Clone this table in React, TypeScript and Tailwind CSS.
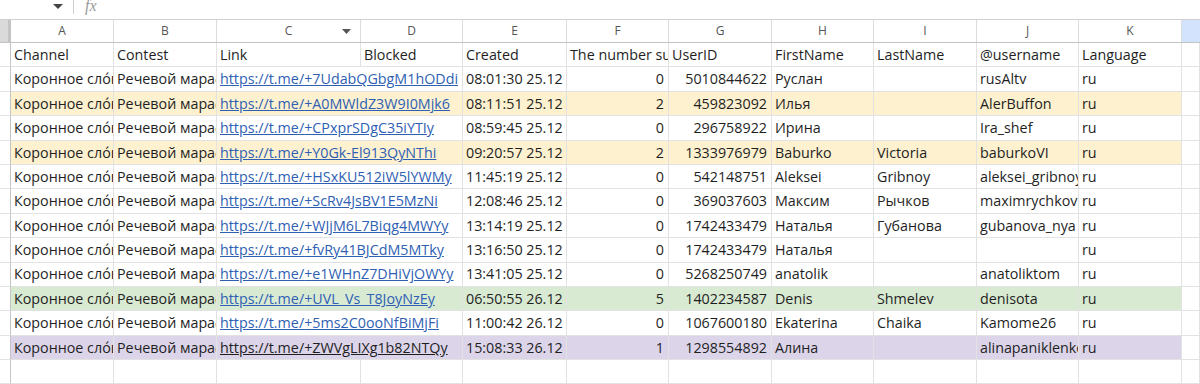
import React from 'react';

type Row = {
  link: string;
  created: string;
  num: string;
  userId: string;
  first: string;
  last: string;
  username: string;
  bg?: string;
  dark?: boolean;
};

const rows: Row[] = [
  { link: '+7UdabQGbgM1hODdi', created: '08:01:30 25.12', num: '0', userId: '5010844622', first: 'Руслан', last: '', username: 'rusAltv' },
  { link: '+A0MWldZ3W9I0Mjk6', created: '08:11:51 25.12', num: '2', userId: '459823092', first: 'Илья', last: '', username: 'AlerBuffon', bg: 'bg-[#fdf1d0]' },
  { link: '+CPxprSDgC35iYTIy', created: '08:59:45 25.12', num: '0', userId: '296758922', first: 'Ирина', last: '', username: 'Ira_shef' },
  { link: '+Y0Gk-El913QyNThi', created: '09:20:57 25.12', num: '2', userId: '1333976979', first: 'Baburko', last: 'Victoria', username: 'baburkoVI', bg: 'bg-[#fdf1d0]' },
  { link: '+HSxKU512iW5lYWMy', created: '11:45:19 25.12', num: '0', userId: '542148751', first: 'Aleksei', last: 'Gribnoy', username: 'aleksei_gribnoy' },
  { link: '+ScRv4JsBV1E5MzNi', created: '12:08:46 25.12', num: '0', userId: '369037603', first: 'Максим', last: 'Рычков', username: 'maximrychkov' },
  { link: '+WJjM6L7Biqg4MWYy', created: '13:14:19 25.12', num: '0', userId: '1742433479', first: 'Наталья', last: 'Губанова', username: 'gubanova_nya' },
  { link: '+fvRy41BJCdM5MTky', created: '13:16:50 25.12', num: '0', userId: '1742433479', first: 'Наталья', last: '', username: '' },
  { link: '+e1WHnZ7DHiVjOWYy', created: '13:41:05 25.12', num: '0', userId: '5268250749', first: 'anatolik', last: '', username: 'anatoliktom' },
  { link: '+UVL_Vs_T8JoyNzEy', created: '06:50:55 26.12', num: '5', userId: '1402234587', first: 'Denis', last: 'Shmelev', username: 'denisota', bg: 'bg-[#d9ead3]' },
  { link: '+5ms2C0ooNfBiMjFi', created: '11:00:42 26.12', num: '0', userId: '1067600180', first: 'Ekaterina', last: 'Chaika', username: 'Kamome26' },
  { link: '+ZWVgLIXg1b82NTQy', created: '15:08:33 26.12', num: '1', userId: '1298554892', first: 'Алина', last: '', username: 'alinapaniklenko', bg: 'bg-[#dcd5ea]', dark: true },
];

const cols = 'grid grid-cols-[11px_103px_103px_144px_102px_104px_102px_103px_102px_103px_102px_103px_1fr]';
const cell = 'h-[24.4px] border-r border-b border-[#e2e2e2] px-[3px] flex items-center overflow-hidden whitespace-nowrap';

function Cell({ children, right, className = '' }: { children?: React.ReactNode; right?: boolean; className?: string }) {
  return <div className={`${cell} ${right ? 'justify-end pr-[4px]' : ''} ${className}`}>{children}</div>;
}

const letters = ['A', 'B', 'C', 'D', 'E', 'F', 'G', 'H', 'I', 'J', 'K'];

export default function App() {
  return (
    <div className="w-[1200px] h-[384px] overflow-hidden bg-white text-[14.3px] text-[#1f1f1f]" style={{ fontFamily: '"Open Sans", sans-serif' }}>
      {/* formula bar strip */}
      <div className="h-[20px] flex items-start border-b border-[#d0d0d0]">
        <div className="w-[73px] flex justify-end pr-[10px] pt-[4px]">
          <svg width="10" height="6" viewBox="0 0 10 6">
            <path d="M0 0 L10 0 L5 5 Z" fill="#444" />
          </svg>
        </div>
        <div className="w-px h-[14px] bg-[#cfcfcf]" />
        <div className="pl-[11px] -mt-[6px] text-[16px] italic text-[#9a9a9a]" style={{ fontFamily: '"Liberation Serif", serif' }}>
          fx
        </div>
      </div>

      {/* column letters */}
      <div className={`${cols} h-[23px] border-b border-[#c4c4c4] text-[12px] text-[#555]`}>
        <div className="bg-[#dadada] border-r-[3px] border-[#c4c4c4]" />
        {letters.map((l) => (
          <div key={l} className="relative flex items-center justify-center border-r border-[#dcdcdc]">
            {l}
            {l === 'C' && (
              <svg className="absolute right-[9px] top-[9px]" width="9" height="5" viewBox="0 0 9 5">
                <path d="M0 0 L9 0 L4.5 5 Z" fill="#555" />
              </svg>
            )}
          </div>
        ))}
        <div className="bg-[#d3e3fd]" />
      </div>

      {/* header row */}
      <div className={cols}>
        <div className="border-r border-[#c4c4c4] border-b border-b-[#e2e2e2]" />
        <Cell>Channel</Cell>
        <Cell>Contest</Cell>
        <Cell>Link</Cell>
        <Cell>Blocked</Cell>
        <Cell>Created</Cell>
        <Cell>The number subscribers</Cell>
        <Cell>UserID</Cell>
        <Cell>FirstName</Cell>
        <Cell>LastName</Cell>
        <Cell>@username</Cell>
        <Cell>Language</Cell>
        <Cell />
      </div>

      {rows.map((r, i) => (
        <div key={i} className={cols}>
          <div className="border-r border-[#c4c4c4] border-b border-b-[#e2e2e2]" />
          <Cell className={r.bg}>Коронное сло́во</Cell>
          <Cell className={r.bg}>Речевой марафон</Cell>
          <Cell className={`col-span-2 ${r.bg ?? ''}`}>
            <span className={`underline ${r.dark ? 'text-[#1f1f1f]' : 'text-[#2f5fb3]'}`}>https://t.me/{r.link}</span>
          </Cell>
          <Cell className={r.bg}>{r.created}</Cell>
          <Cell right className={r.bg}>{r.num}</Cell>
          <Cell right className={r.bg}>{r.userId}</Cell>
          <Cell className={r.bg}>{r.first}</Cell>
          <Cell className={r.bg}>{r.last}</Cell>
          <Cell className={r.bg}>{r.username}</Cell>
          <Cell className={r.bg}>ru</Cell>
          <Cell />
        </div>
      ))}

      <div className={cols}>
        <div className="border-r border-[#c4c4c4] border-b border-b-[#e2e2e2]" />
        {letters.map((l) => (
          <Cell key={l} />
        ))}
        <Cell />
      </div>
    </div>
  );
}
